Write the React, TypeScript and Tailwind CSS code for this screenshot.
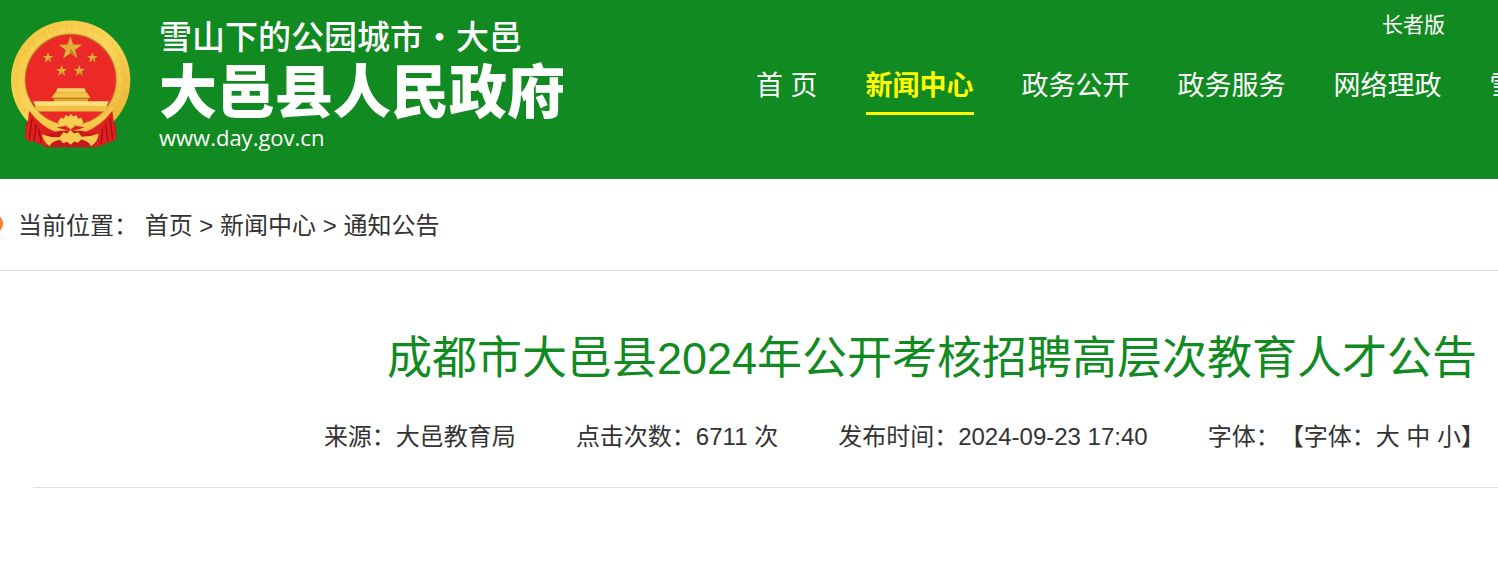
import React from 'react';

const navItems = ['首 页', '新闻中心', '政务公开', '政务服务', '网络理政', '雪山大邑'];

const stars = [
  { x: 211, y: 115, r: 37 },
  { x: 144, y: 143, r: 17 },
  { x: 277, y: 143, r: 17 },
  { x: 185, y: 182, r: 18 },
  { x: 238, y: 182, r: 18 },
];

const starPoints = (x: number, y: number, r: number) =>
  Array.from({ length: 10 }, (_, i) => {
    const radius = i % 2 === 0 ? r : r * 0.39;
    const angle = (Math.PI / 5) * i - Math.PI / 2;
    return `${x + radius * Math.cos(angle)},${y + radius * Math.sin(angle)}`;
  }).join(' ');

const Emblem: React.FC = () => (
  <svg viewBox="33 30 360 386" className="h-[129px] w-[120px] shrink-0" aria-hidden="true">
    <defs>
      <linearGradient id="gold" x1="0" y1="0" x2="1" y2="1">
        <stop offset="0" stopColor="#f3c33c" />
        <stop offset="0.5" stopColor="#f9d458" />
        <stop offset="1" stopColor="#e9ae2b" />
      </linearGradient>
    </defs>
    {/* wreath */}
    <circle cx="212" cy="210" r="179" fill="url(#gold)" />
    <circle cx="212" cy="210" r="165" fill="none" stroke="#dea32a" strokeWidth="6" strokeDasharray="9 14 4 11" opacity="0.25" />
    <circle cx="212" cy="210" r="149" fill="none" stroke="#fde27d" strokeWidth="6" strokeDasharray="12 9 5 16" opacity="0.4" />
    <circle cx="212" cy="208" r="138" fill="#b98425" />
    <circle cx="212" cy="209" r="135" fill="#eb2a27" />
    {stars.map((star) => (
      <g key={star.x}>
        <polygon points={starPoints(star.x, star.y, star.r)} fill="#e0b03a" />
        <path d={`M${star.x} ${star.y - star.r} V${star.y} L${star.x + star.r * 0.58} ${star.y + star.r * 0.8} L${star.x} ${star.y + star.r * 0.38} Z`} fill="#b67d22" />
      </g>
    ))}
    {/* gate tower */}
    <path d="M172 234 H254 L258 246 H168 Z" fill="#f8d363" />
    <path d="M166 246 H260 L271 263 H154 Z" fill="#f3c648" />
    <path d="M162 263 H264 V277 H162 Z" fill="#dda531" />
    <path d="M100 273 H326 L319 288 H107 Z" fill="#ffe17b" />
    <path d="M104 287 H322 L318 304 H108 Z" fill="#f1c044" />
    <path d="M159 265 H268" stroke="#ba8022" strokeWidth="3" />
    {/* ribbon and wreath knot */}
    <path d="M78 336 Q130 374 182 362 H242 Q294 374 346 336 L350 384 Q336 398 322 397 Q314 408 304 404 Q296 412 284 411 H142 Q134 412 124 402 Q112 404 102 392 Q88 398 76 384 Z" fill="#c9161b" />
    <path d="M88 302 L76 384 Q88 400 102 392 Q112 404 124 402 Q134 412 142 408 L128 374 L172 368 Q122 350 88 302 Z" fill="#e0201f" />
    <path d="M337 302 L348 384 Q336 398 322 394 Q314 408 304 402 Q296 412 282 410 L296 374 L250 368 Q302 350 337 302 Z" fill="#e0201f" />
    <path d="M96 325 L88 388 M108 342 L102 392 M116 355 L124 398 M330 325 L338 386 M317 342 L323 392 M308 355 L303 402" stroke="#a10d14" strokeWidth="4" fill="none" />
    <path d="M100 304 Q136 336 184 343 L212 350 L241 343 Q288 336 325 304 L337 300 Q302 350 241 357 L212 362 L184 357 Q122 350 88 300 Z" fill="#f6ca4d" />
    <path d="M170 352 Q190 346 200 348 L212 358 L224 348 Q236 346 254 352 L212 364 Z" fill="#df2020" />
    <path d="M173 336 L183 322 L192 326 L196 315 L207 319 L212 311 L220 319 L230 315 L234 326 L244 323 L250 336 L240 349 L226 343 L212 350 L198 343 L184 350 Z" fill="#f8cf50" />
    <path d="M126 372 Q150 382 179 381 L190 366 L202 370 L211 359 L222 370 L235 366 L245 380 Q270 380 296 371 Q293 397 273 408 Q267 393 243 388 L234 398 L223 394 L212 404 L201 395 L189 399 L180 389 Q155 393 149 408 Q130 396 126 372 Z" fill="#f5cb50" />
  </svg>
);

const App: React.FC = () => {
  return (
    <div lang="zh-CN" className="min-h-[575px] overflow-hidden bg-white font-['Liberation_Sans','Noto_Sans_CJK_SC',sans-serif] text-[#333333]">
      <header className="flex h-[179px] bg-[#118a22] text-white">
        <a href="#" className="flex w-1/2 items-start gap-7 pl-[11px] pt-5">
          <Emblem />
          <div className="whitespace-nowrap font-['Noto_Sans_CJK_SC',sans-serif]">
            <p className="text-[33px] font-medium leading-[30px]">雪山下的公园城市·大邑</p>
            <p className="mt-1 text-[58px] font-black leading-[68px]">大邑县人民政府</p>
            <p className="font-['Open_Sans',sans-serif] text-[22px] leading-[30px]">www.day.gov.cn</p>
          </div>
        </a>
        <div className="w-1/2 overflow-hidden pl-[7px]">
          <div className="flex justify-end pr-[53px] pt-2">
            <a href="#" className="text-[21px] leading-[34px]">长者版</a>
          </div>
          <nav className="mt-[18px] flex gap-12 whitespace-nowrap text-[27px] leading-[52px]">
            {navItems.map((item) => (
              <a
                key={item}
                href="#"
                className={item === '新闻中心' ? 'border-b-3 border-[#ffff00] font-bold text-[#ffff00]' : ''}
              >
                {item}
              </a>
            ))}
          </nav>
        </div>
      </header>

      <nav className="flex h-[92px] items-center gap-[14px] border-b border-[#dddddd] pt-[3px] text-2xl">
        <svg viewBox="0 0 4 26" className="h-[26px] w-1 shrink-0" aria-hidden="true">
          <ellipse cx="-3" cy="24" rx="5" ry="2" fill="#eeeeee" />
          <path d="M-11 11 A7 9 0 0 1 3 11 Q3 15 -4 23 Q-11 15 -11 11 Z" fill="#ff7f27" />
        </svg>
        <p className="whitespace-nowrap">
          当前位置： <a href="#">首页</a> &gt; <a href="#">新闻中心</a> &gt; <a href="#">通知公告</a>
        </p>
      </nav>

      <main className="ml-[33px] whitespace-nowrap border-b border-[#dddddd] pb-8 pt-[54px]">
        <h1 className="flex justify-end pr-[21px] text-[45px] leading-[68px] text-[#118a22]">
          成都市大邑县2024年公开考核招聘高层次教育人才公告
        </h1>
        <div className="mt-[26px] flex justify-end gap-[60px] pr-[13px] text-2xl leading-9 [text-spacing-trim:space-all]">
          <span>来源：大邑教育局</span>
          <span>点击次数：6711 次</span>
          <span>发布时间：2024-09-23 17:40</span>
          <span>
            字体：【字体：<button type="button">大</button> <button type="button">中</button>{' '}
            <button type="button">小</button>】
          </span>
        </div>
      </main>
    </div>
  );
};

export default App;
